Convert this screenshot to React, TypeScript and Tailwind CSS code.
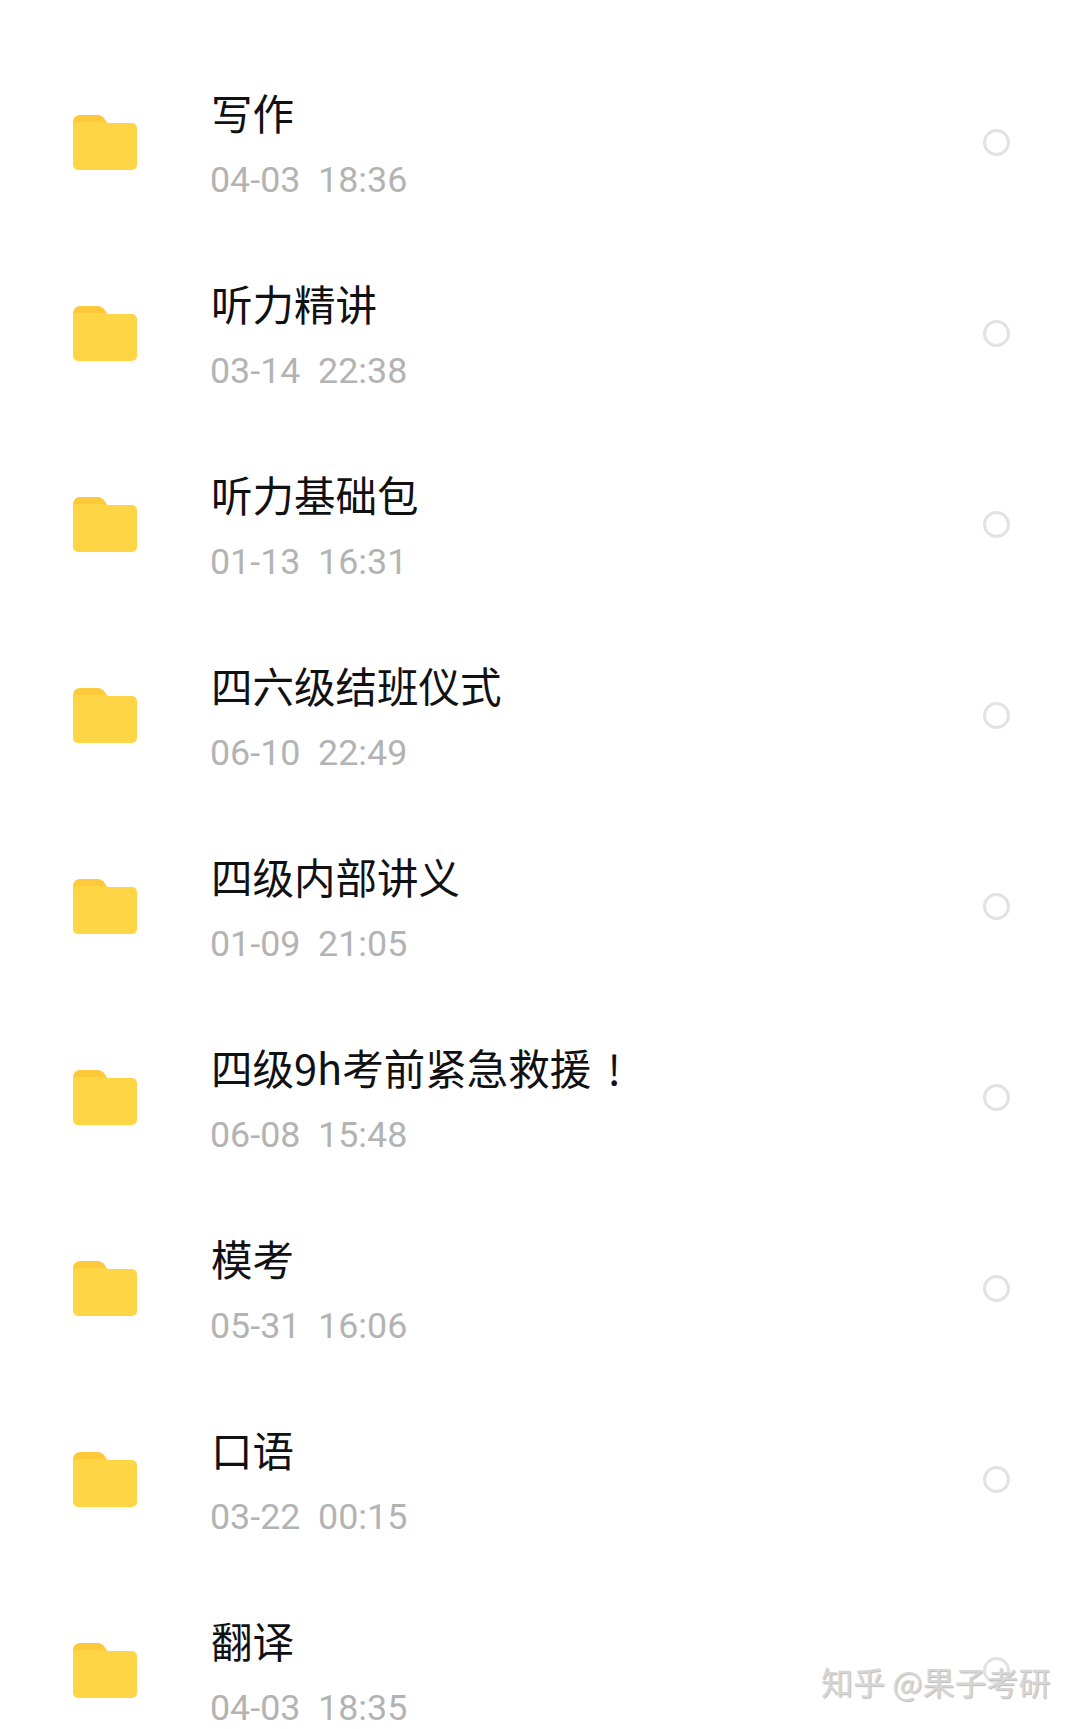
const folders = [
  { name: "写作", time: "04-03  18:36" },
  { name: "听力精讲", time: "03-14  22:38" },
  { name: "听力基础包", time: "01-13  16:31" },
  { name: "四六级结班仪式", time: "06-10  22:49" },
  { name: "四级内部讲义", time: "01-09  21:05" },
  { name: "四级9h考前紧急救援 \u2006!", time: "06-08  15:48" },
  { name: "模考", time: "05-31  16:06" },
  { name: "口语", time: "03-22  00:15" },
  { name: "翻译", time: "04-03  18:35" },
];

const FolderIcon = () => (
  <svg width="66" height="58" viewBox="0 0 66 58" className="blur-[0.7px]">
    <path d="M1 9a7 7 0 0 1 7-7h17c4 0 6 1.500 8 4.500L36 11H1z" fill="#fdc83a" />
    <path d="M1 12a3 3 0 0 1 3-3h29c1.500 0 2 1 3.500 1H60a5 5 0 0 1 5 5v37a5 5 0 0 1-5 5H6a5 5 0 0 1-5-5z" fill="#fed545" />
  </svg>
);

const FolderRow = ({ name, time }: { name: string; time: string }) => {
  return (
    <div className="flex h-[191px] shrink-0 items-center pl-[72px] pr-[70px]">
      <FolderIcon />
      <div className="ml-[72px] flex min-w-0 flex-1 flex-col pt-[5px]">
        <span className="h-[48px] pl-[1px] text-[41.5px] leading-[48px] whitespace-pre text-[#111114] [font-family:'Noto_Sans_CJK_SC','Roboto',sans-serif]">
          {name}
        </span>
        <span className="mt-[23px] h-[42px] text-[35.8px] leading-[42px] whitespace-pre text-[#b3b3b3] [font-family:'Roboto',sans-serif]">
          {time}
        </span>
      </div>
      <div className="mt-[2px] h-[27px] w-[27px] shrink-0 rounded-full border-[3px] border-[#e2e2e2] blur-[0.5px]" />
    </div>
  );
};

export default function App() {
  return (
    <div className="relative flex h-[1729px] w-[1080px] flex-col overflow-hidden bg-white pt-[46px]">
      {folders.map((folder) => (
        <FolderRow key={folder.name} name={folder.name} time={folder.time} />
      ))}
      <div className="absolute top-[1661px] left-[821px] text-[32px] leading-[40px] whitespace-nowrap text-[#d6d6d6] [font-family:'Noto_Sans_CJK_SC','Roboto',sans-serif] [text-shadow:1px_1px_1px_#bcbcbc]">
        知乎 @果子考研
      </div>
    </div>
  );
}
